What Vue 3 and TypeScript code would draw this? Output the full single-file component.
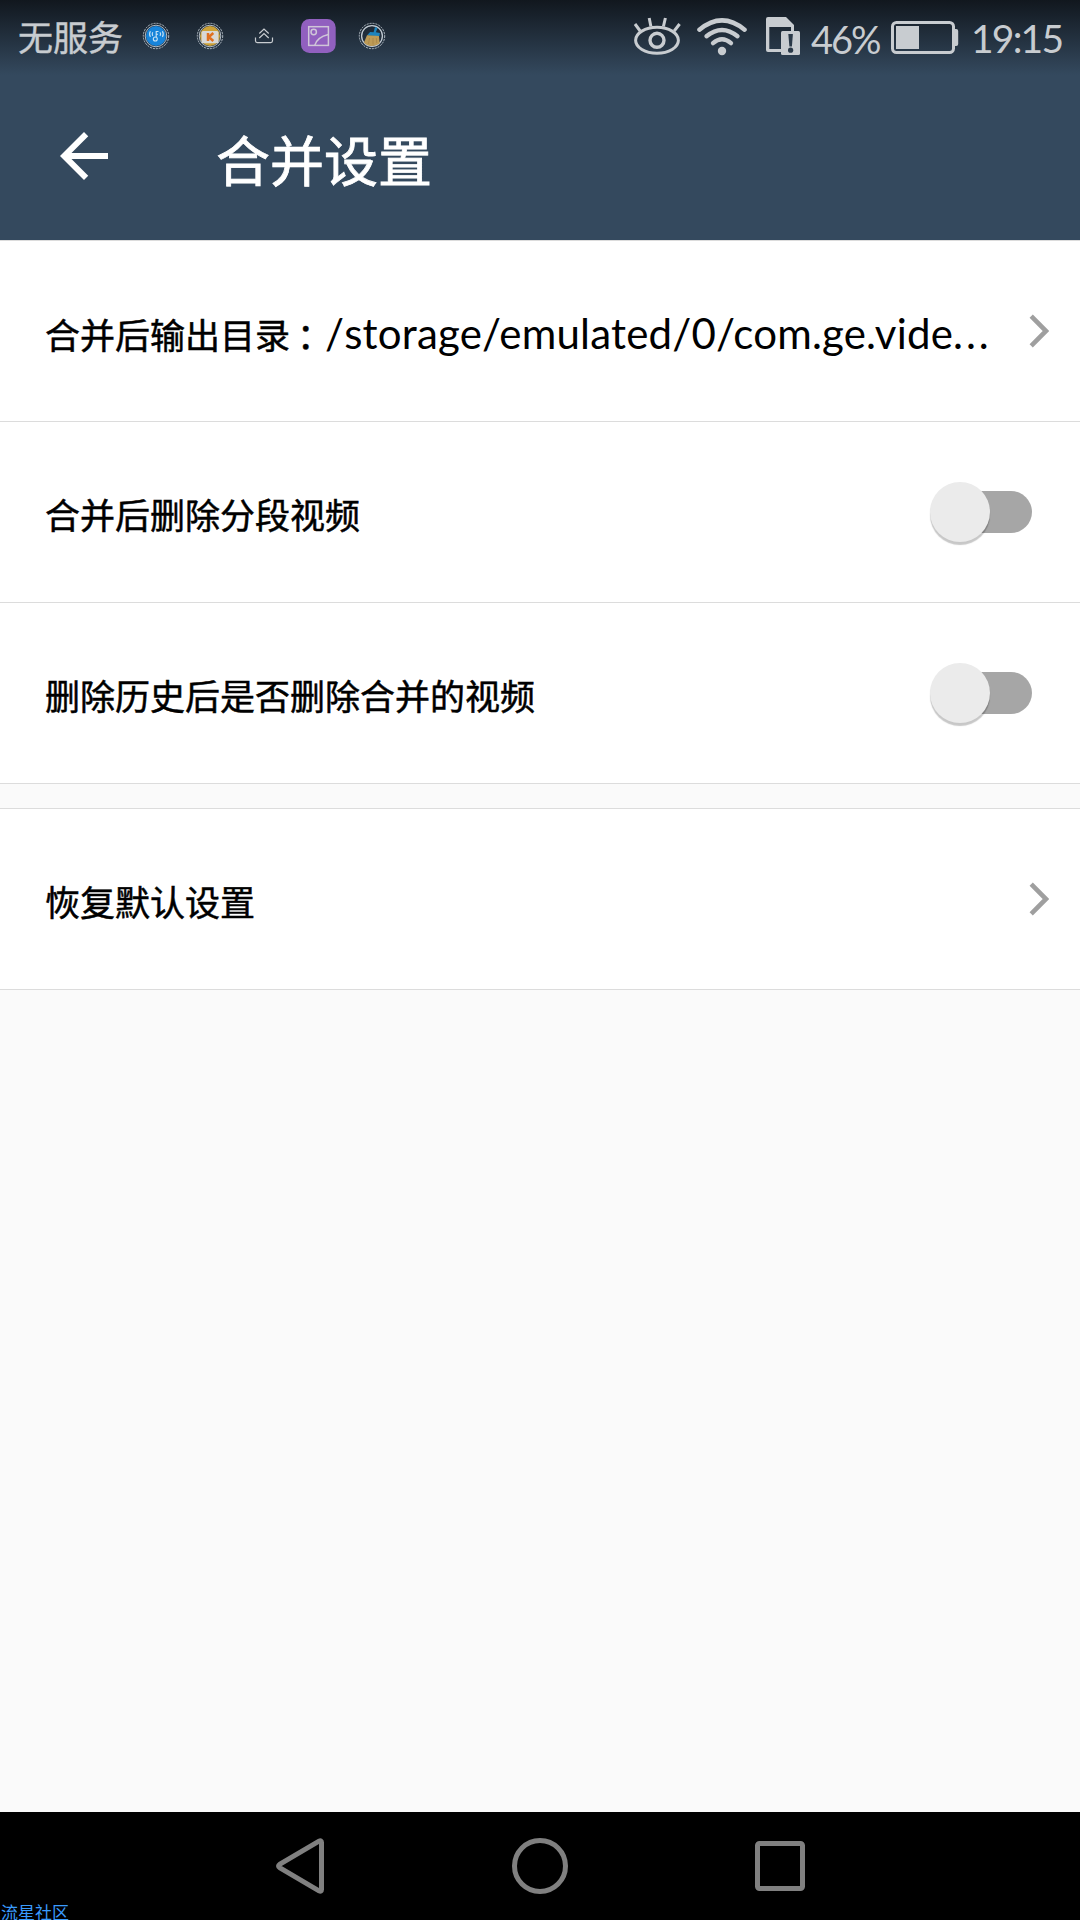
<script setup lang="ts">
import { reactive } from 'vue'

interface Row {
  id: string
  label: string
  path?: string
  kind: 'link' | 'switch'
  on?: boolean
}

const groups = reactive<Row[][]>([
  [
    { id: 'output', label: '合并后输出目录', path: '/storage/emulated/0/com.ge.vide', kind: 'link' },
    { id: 'segments', label: '合并后删除分段视频', kind: 'switch', on: false },
    { id: 'history', label: '删除历史后是否删除合并的视频', kind: 'switch', on: false },
  ],
  [{ id: 'reset', label: '恢复默认设置', kind: 'link' }],
])

function activate(row: Row) {
  if (row.kind === 'switch') row.on = !row.on
}
</script>

<template>
  <div class="screen">
    <header class="header">
      <div class="status">
        <span class="carrier">无服务</span>
        <div class="notices">
          <svg class="notice" viewBox="0 0 54 54">
            <circle cx="27" cy="27" r="12.7" class="ring dotted" />
            <circle cx="27" cy="27" r="10.8" class="ring" />
            <circle cx="27" cy="27" r="10" fill="#1784da" />
            <g fill="none" stroke="#c9e3f5" stroke-width="1.1">
              <circle cx="26.3" cy="30" r="2" />
              <path d="M27.2 28.2V22.5h2.3M27.2 25.2h1.8M23.8 23.3q-1.2 1.7 0 3.6M21.4 22.3q-1.7 2.8 0 5.6M31 23.3q1.2 1.7 0 3.6M33.4 22.3q1.7 2.8 0 5.6" />
            </g>
          </svg>
          <svg class="notice" viewBox="0 0 54 54">
            <circle cx="27" cy="27" r="12.7" class="ring dotted" />
            <circle cx="27" cy="27" r="10.8" class="ring" />
            <circle cx="27" cy="27" r="10" fill="#cda237" />
            <rect x="18.5" y="22" width="17" height="12.3" rx="1.5" fill="#d8d8d6" />
            <path d="M25 24v8M30.3 24l-4.5 4 4.5 4" fill="none" stroke="#e07020" stroke-width="2.5" />
          </svg>
          <svg class="notice" viewBox="0 0 54 54">
            <g fill="none" stroke="#c9cdd1" stroke-width="1.2">
              <path d="M22.3 24.5l4.7-4.4 4.7 4.4M22.3 29l4.7-4.4 4.7 4.4M18.5 28.6v3.2q0 1.8 1.8 1.8h13.4q1.8 0 1.8-1.8v-3.2" />
            </g>
          </svg>
          <svg class="notice" viewBox="0 0 54 54">
            <rect x="10" y="10" width="34.7" height="34" rx="8.5" fill="#9160bf" />
            <g fill="none" stroke="#cfc6d8" stroke-width="1.5">
              <rect x="17.7" y="17.7" width="19.7" height="18.7" />
              <circle cx="22.7" cy="23" r="2.7" />
              <path d="M23.7 36.4q2.3-8.4 13.7-11" />
            </g>
          </svg>
          <svg class="notice" viewBox="0 0 54 54">
            <circle cx="27" cy="27" r="12.7" class="ring dotted" />
            <circle cx="27" cy="27" r="10.4" class="ring wide" />
            <path d="M30 18l2.5 1-1.6 4.3 4 .7-.5 3.2-12.5-.8 3.2-3.4 3.5.2z" fill="#1d84bd" />
            <path d="M22 26.3l12 .8.7 7.5q-4 2.6-8.2 2.4-4.8-.3-7.5-3.5z" fill="#bd9b56" />
            <path d="M24.5 29l-1 6M28 29v6.5M31.3 29l.5 5" stroke="#a78345" stroke-width=".8" />
          </svg>
        </div>
        <div class="system">
          <svg class="eye" width="48" height="40" viewBox="0 0 48 40" fill="none" stroke="#c8ccd0" stroke-width="3">
            <ellipse cx="24" cy="24.3" rx="21.4" ry="13" />
            <circle cx="24" cy="24.3" r="7" stroke-width="3.4" />
            <path d="M2 8l5.2 7M16.2 2l1.7 8.5M32.4 2l-2 8.5M46.6 8l-5.4 7" />
          </svg>
          <svg class="wifi" width="52" height="40" viewBox="0 0 52 40" fill="none" stroke="#c8ccd0" stroke-linecap="round">
            <path d="M3.4 13.7Q26-5 48.6 13.7" stroke-width="4.4" />
            <path d="M10.5 20.2Q26 7.6 41.5 20.2" stroke-width="4.4" />
            <path d="M17 27.1Q26 19.3 35 27.1" stroke-width="4.4" />
            <circle cx="26" cy="35" r="4.2" fill="#c8ccd0" stroke="none" />
          </svg>
          <svg class="sim" width="36" height="40" viewBox="0 0 36 40">
            <path d="M2 1h18l8 8v6h-3v-4H3.3v22H16v3H2q-2 0-2-2V3q0-2 2-2z" fill="#c8ccd0" />
            <rect x="15" y="15" width="19" height="24" rx="1.5" fill="#c8ccd0" />
            <path d="M22.3 18h4.6l-1 12.5h-2.5z" fill="#2a3948" />
            <circle cx="24.6" cy="34.2" r="2.6" fill="#2a3948" />
          </svg>
          <span class="percent">46%</span>
          <svg class="battery" width="68" height="34" viewBox="0 0 68 34">
            <rect x="1.5" y="1.5" width="61" height="30" rx="4" fill="none" stroke="#c8ccd0" stroke-width="3" />
            <path d="M64 8h1.2q2 0 2 2v13q0 2-2 2H64z" fill="#c8ccd0" />
            <rect x="5" y="5" width="23" height="23" fill="#c8ccd0" />
          </svg>
          <span class="clock">19:15</span>
        </div>
      </div>
      <div class="toolbar">
        <svg class="back" viewBox="0 0 24 24" fill="#fff">
          <path d="M20 11H7.83l5.59-5.59L12 4l-8 8 8 8 1.41-1.41L7.83 13H20z" />
        </svg>
        <h1 class="title">合并设置</h1>
      </div>
    </header>

    <main class="content">
      <section v-for="(group, index) in groups" :key="index" class="group">
        <div v-for="row in group" :key="row.id" class="row" @click="activate(row)">
          <div class="label">
            <span>{{ row.label }}</span><template v-if="row.path"><span class="colon">：</span><span class="path">{{ row.path }}<span class="dots">...</span></span></template>
          </div>
          <svg v-if="row.kind === 'link'" class="chevron" width="20" height="34" viewBox="0 0 20 34">
            <path d="M2.2 2.2L17 17 2.2 31.8" fill="none" stroke="#9f9f9f" stroke-width="4.6" />
          </svg>
          <div v-else class="switch" :class="{ on: row.on }">
            <div class="thumb"></div>
          </div>
        </div>
      </section>
    </main>

    <nav class="nav">
      <svg viewBox="0 0 60 60"><path d="M51.5 6.5V53.5Q51.5 56 49 54.8L10 32Q7 30 10 28L49 5.2Q51.5 4 51.5 6.5z" /></svg>
      <svg viewBox="0 0 60 60"><circle cx="30" cy="30" r="25.5" /></svg>
      <svg viewBox="0 0 60 60"><rect x="7.5" y="7.5" width="45" height="45" rx="2" /></svg>
      <span class="watermark">流星社区</span>
    </nav>
  </div>
</template>

<style>
body {
  margin: 0;
}
</style>

<style scoped>
.screen {
  width: 1080px;
  height: 1920px;
  display: flex;
  flex-direction: column;
  overflow: hidden;
  background: #fafafa;
  font-family: Lato, 'Noto Sans CJK SC', sans-serif;
  color: #000;
}
.header {
  height: 240px;
  flex: none;
  background: linear-gradient(#11171e 0, #34495e 75px);
  border-bottom: 1px solid #dcdcdc;
}
.status {
  height: 72px;
  display: flex;
  align-items: center;
  color: #c8ccd0;
  white-space: nowrap;
}
.carrier {
  width: 111px;
  padding-left: 18px;
  font: 35px/72px 'Noto Sans CJK SC', sans-serif;
  -webkit-text-stroke: 0.4px #c8ccd0;
}
.notices {
  display: flex;
}
.notice {
  width: 54px;
  height: 54px;
}
.ring {
  fill: none;
  stroke: #c3ccd4;
  stroke-width: 0.9;
}
.ring.wide {
  stroke-width: 1.3;
}
.ring.dotted {
  stroke-dasharray: 2 1;
}
.system {
  display: flex;
  align-items: center;
  flex: 1;
  padding-left: 234px;
}
.system svg {
  flex: none;
}
.wifi {
  margin-left: 15px;
}
.sim {
  margin-left: 18px;
}
.percent {
  width: 80px;
  margin-left: 9px;
  font-size: 38px;
  line-height: 72px;
  letter-spacing: -2px;
  padding-top: 5px;
}
.battery {
  margin-top: 4px;
}
.clock {
  margin-left: 12px;
  font-size: 39px;
  line-height: 72px;
  letter-spacing: -1.8px;
  padding-top: 4px;
}
.toolbar {
  height: 168px;
  display: flex;
  align-items: center;
}
.back {
  width: 72px;
  height: 72px;
  margin-left: 48px;
}
.title {
  margin: 5px 0 0 96px;
  font: 400 54px/80px 'Noto Sans CJK SC', sans-serif;
  color: #fff;
  -webkit-text-stroke: 0.8px #fff;
}
.content {
  flex: 1;
}
.group + .group {
  margin-top: 24px;
  border-top: 1px solid #dcdcdc;
}
.row {
  height: 180px;
  padding: 0 48px 0 45px;
  display: flex;
  align-items: center;
  justify-content: space-between;
  background: #fff;
  border-bottom: 1px solid #dcdcdc;
}
.row:has(.chevron) {
  padding-right: 31px;
}
.label {
  height: 50px;
  margin-top: 4px;
  font: 35px/50px 'Noto Sans CJK SC', sans-serif;
  -webkit-text-stroke: 0.5px #000;
  white-space: nowrap;
}
.colon {
  padding-left: 7px;
  letter-spacing: -7px;
}
.path {
  font-family: Lato, sans-serif;
  font-size: 42px;
  letter-spacing: 0.2px;
  -webkit-text-stroke: 0;
}
.dots {
  letter-spacing: 3px;
}
.switch {
  width: 102px;
  height: 42px;
  display: flex;
  align-items: center;
  border-radius: 21px;
  background: linear-gradient(90deg, transparent 30px, #a6a6a6 30px);
}
.switch.on {
  justify-content: flex-end;
}
.thumb {
  width: 60px;
  height: 60px;
  flex: none;
  border-radius: 50%;
  background: #ebebeb;
  box-shadow: 0 3px 1px rgba(0, 0, 0, 0.22);
}
.nav {
  position: relative;
  height: 108px;
  flex: none;
  display: flex;
  justify-content: center;
  align-items: center;
  gap: 180px;
  background: #000;
}
.nav svg {
  width: 60px;
  height: 60px;
  fill: none;
  stroke: #808080;
  stroke-width: 5;
}
.watermark {
  position: absolute;
  left: 1px;
  bottom: 0;
  font: 17px/17px 'Noto Sans CJK SC', sans-serif;
  color: #3a9bfd;
}
</style>
